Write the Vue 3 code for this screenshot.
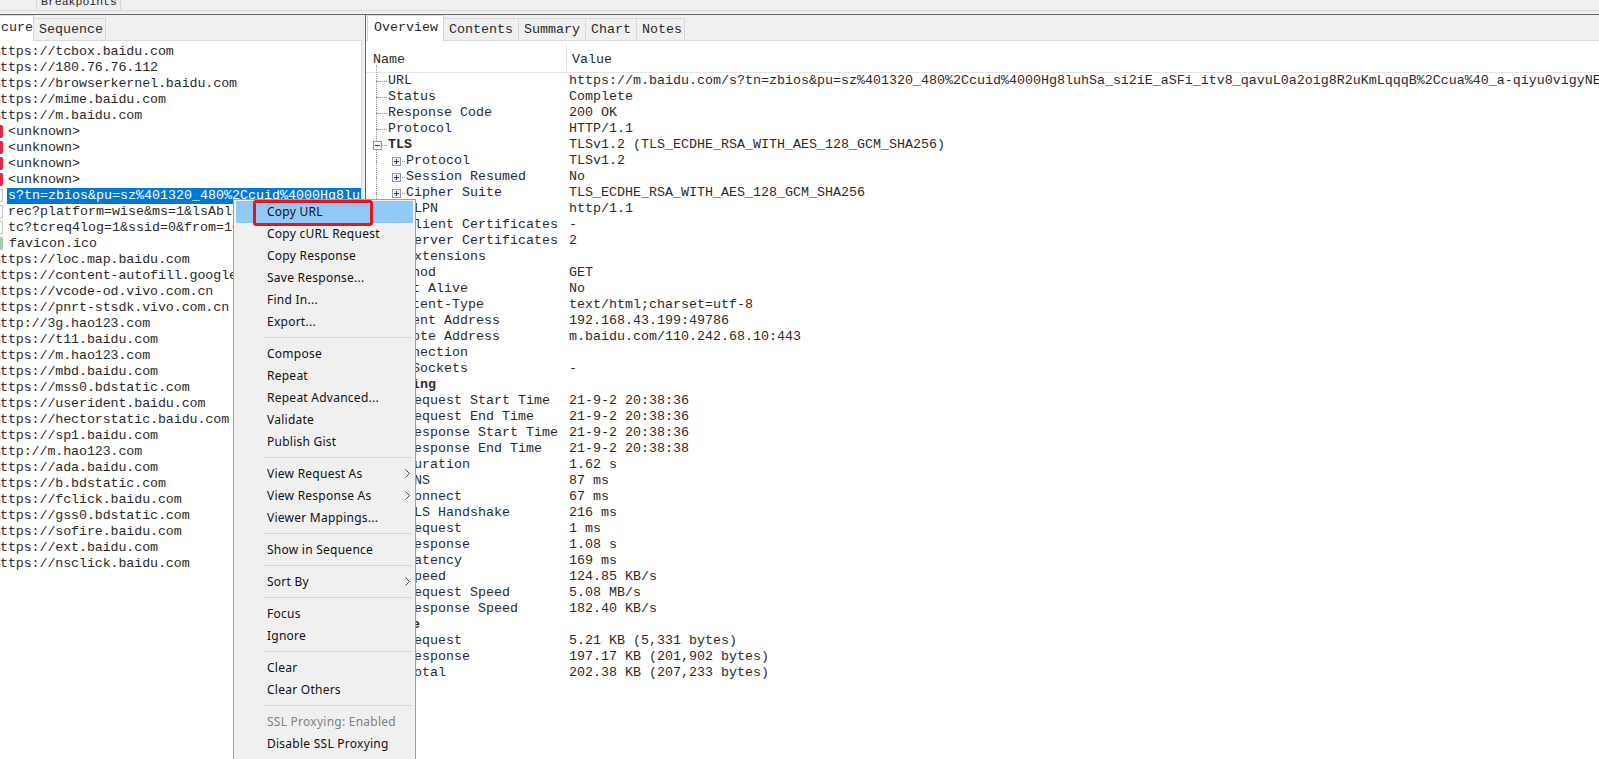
<template>
  <div class="app">
    <div class="topbar">
      <div class="top-first">11 +</div>
      <div class="top-tab">Breakpoints</div>
    </div>

    <div class="panes">
      <section class="left">
        <div class="tabs">
          <div class="tab active first-left">cure</div>
          <div class="tab">Sequence</div>
        </div>
        <div class="tree">
          <div
            v-for="(row, i) in hosts"
            :key="i"
            class="host"
            :class="row.kind || 'plain'"
          >
            <i v-if="row.kind" class="file-icon"></i>
            <span class="host-text">{{ row.text }}</span>
          </div>
        </div>
      </section>

      <section class="right">
        <div class="tabs">
          <div class="tab active">Overview</div>
          <div v-for="t in detailTabs" :key="t" class="tab">{{ t }}</div>
        </div>
        <div class="table">
          <div class="head">
            <div class="head-name">Name</div>
            <div class="head-value">Value</div>
          </div>
          <div v-for="(row, i) in details" :key="i" class="row">
            <div class="name" :class="['lv' + row.lv, { bold: row.bold }]">
              <svg v-if="row.box" class="box" width="9" height="9" viewBox="0 0 9 9">
                <rect x="0.5" y="0.5" width="8" height="8" fill="#f1f3f8" stroke="#8e9ab0" />
                <path d="M2 4.5h5" stroke="#26407e" />
                <path v-if="row.box === 'plus'" d="M4.5 2v5" stroke="#26407e" />
              </svg>
              {{ row.name }}
            </div>
            <div class="value">{{ row.value }}</div>
          </div>
        </div>
      </section>
    </div>

    <div class="menu">
      <template v-for="(m, i) in menu" :key="i">
        <div v-if="m.sep" class="sep"></div>
        <div v-else class="item" :class="{ hot: m.hot, off: m.off }">
          {{ m.label }}
          <svg v-if="m.sub" class="chev" width="5" height="9" viewBox="0 0 5 9">
            <path d="M0.5 0.5l4 4-4 4" fill="none" stroke="#444" />
          </svg>
        </div>
      </template>
      <div class="callout"></div>
    </div>
  </div>
</template>

<script setup>
const baidu = (s) => "ttps://" + s;

const hosts = [
  { text: baidu("tcbox.baidu.com") },
  { text: baidu("180.76.76.112") },
  { text: baidu("browserkernel.baidu.com") },
  { text: baidu("mime.baidu.com") },
  { text: baidu("m.baidu.com") },
  { text: "<unknown>", kind: "bad" },
  { text: "<unknown>", kind: "bad" },
  { text: "<unknown>", kind: "bad" },
  { text: "<unknown>", kind: "bad" },
  { text: "s?tn=zbios&pu=sz%401320_480%2Ccuid%4000Hg8luhSa_si2iE", kind: "doc selected" },
  { text: "rec?platform=wise&ms=1&lsAble=1&pu=sz", kind: "doc" },
  { text: "tc?tcreq4log=1&ssid=0&from=1000", kind: "doc" },
  { text: "favicon.ico", kind: "img" },
  { text: baidu("loc.map.baidu.com") },
  { text: baidu("content-autofill.googleapis.com") },
  { text: baidu("vcode-od.vivo.com.cn") },
  { text: baidu("pnrt-stsdk.vivo.com.cn") },
  { text: "ttp://3g.hao123.com" },
  { text: baidu("t11.baidu.com") },
  { text: baidu("m.hao123.com") },
  { text: baidu("mbd.baidu.com") },
  { text: baidu("mss0.bdstatic.com") },
  { text: baidu("userident.baidu.com") },
  { text: baidu("hectorstatic.baidu.com") },
  { text: baidu("sp1.baidu.com") },
  { text: "ttp://m.hao123.com" },
  { text: baidu("ada.baidu.com") },
  { text: baidu("b.bdstatic.com") },
  { text: baidu("fclick.baidu.com") },
  { text: baidu("gss0.bdstatic.com") },
  { text: baidu("sofire.baidu.com") },
  { text: baidu("ext.baidu.com") },
  { text: baidu("nsclick.baidu.com") },
];

const detailTabs = ["Contents", "Summary", "Chart", "Notes"];

const details = [
  { lv: 1, name: "URL", value: "https://m.baidu.com/s?tn=zbios&pu=sz%401320_480%2Ccuid%4000Hg8luhSa_si2iE_aSFi_itv8_qavuL0a2oig8R2uKmLqqqB%2Ccua%40_a-qiyu0vigyNE" },
  { lv: 1, name: "Status", value: "Complete" },
  { lv: 1, name: "Response Code", value: "200 OK" },
  { lv: 1, name: "Protocol", value: "HTTP/1.1" },
  { lv: 1, name: "TLS", bold: true, box: "minus", value: "TLSv1.2 (TLS_ECDHE_RSA_WITH_AES_128_GCM_SHA256)" },
  { lv: 2, name: "Protocol", box: "plus", value: "TLSv1.2" },
  { lv: 2, name: "Session Resumed", box: "plus", value: "No" },
  { lv: 2, name: "Cipher Suite", box: "plus", value: "TLS_ECDHE_RSA_WITH_AES_128_GCM_SHA256" },
  { lv: 2, name: "ALPN", value: "http/1.1" },
  { lv: 2, name: "Client Certificates", value: "-" },
  { lv: 2, name: "Server Certificates", value: "2" },
  { lv: 2, name: "Extensions", value: "" },
  { lv: 1, name: "Method", value: "GET" },
  { lv: 1, name: "Kept Alive", value: "No" },
  { lv: 1, name: "Content-Type", value: "text/html;charset=utf-8" },
  { lv: 1, name: "Client Address", value: "192.168.43.199:49786" },
  { lv: 1, name: "Remote Address", value: "m.baidu.com/110.242.68.10:443" },
  { lv: 1, name: "Connection", value: "" },
  { lv: 1, name: "WebSockets", value: "-" },
  { lv: 1, name: "Timing", bold: true, box: "minus", value: "" },
  { lv: 2, name: "Request Start Time", value: "21-9-2 20:38:36" },
  { lv: 2, name: "Request End Time", value: "21-9-2 20:38:36" },
  { lv: 2, name: "Response Start Time", value: "21-9-2 20:38:36" },
  { lv: 2, name: "Response End Time", value: "21-9-2 20:38:38" },
  { lv: 2, name: "Duration", value: "1.62 s" },
  { lv: 2, name: "DNS", value: "87 ms" },
  { lv: 2, name: "Connect", value: "67 ms" },
  { lv: 2, name: "TLS Handshake", value: "216 ms" },
  { lv: 2, name: "Request", value: "1 ms" },
  { lv: 2, name: "Response", value: "1.08 s" },
  { lv: 2, name: "Latency", value: "169 ms" },
  { lv: 2, name: "Speed", value: "124.85 KB/s" },
  { lv: 2, name: "Request Speed", value: "5.08 MB/s" },
  { lv: 2, name: "Response Speed", value: "182.40 KB/s" },
  { lv: 1, name: "Size", bold: true, box: "minus", value: "" },
  { lv: 2, name: "Request", value: "5.21 KB (5,331 bytes)" },
  { lv: 2, name: "Response", value: "197.17 KB (201,902 bytes)" },
  { lv: 2, name: "Total", value: "202.38 KB (207,233 bytes)" },
];

const menu = [
  { label: "Copy URL", hot: true },
  { label: "Copy cURL Request" },
  { label: "Copy Response" },
  { label: "Save Response..." },
  { label: "Find In..." },
  { label: "Export..." },
  { sep: true },
  { label: "Compose" },
  { label: "Repeat" },
  { label: "Repeat Advanced..." },
  { label: "Validate" },
  { label: "Publish Gist" },
  { sep: true },
  { label: "View Request As", sub: true },
  { label: "View Response As", sub: true },
  { label: "Viewer Mappings..." },
  { sep: true },
  { label: "Show in Sequence" },
  { sep: true },
  { label: "Sort By", sub: true },
  { sep: true },
  { label: "Focus" },
  { label: "Ignore" },
  { sep: true },
  { label: "Clear" },
  { label: "Clear Others" },
  { sep: true },
  { label: "SSL Proxying: Enabled", off: true },
  { label: "Disable SSL Proxying" },
];
</script>

<style>
html,
body {
  margin: 0;
  overflow: hidden;
  background: #f0f0f0;
}
</style>

<style scoped>
.app {
  position: relative;
  width: 1599px;
  height: 759px;
  overflow: hidden;
  display: flex;
  flex-direction: column;
  background: #f0f0f0;
  font-family: "Liberation Mono", monospace;
  font-size: 13.33px;
  line-height: 16px;
  color: #2a2a2a;
}

.topbar {
  height: 10px;
  margin-bottom: 3px;
  border-bottom: 1px solid #d9d9d9;
  display: flex;
  align-items: flex-end;
  overflow: hidden;
  flex: none;
}
.top-first {
  width: 36px;
  height: 21px;
  flex: none;
  white-space: pre;
  overflow: hidden;
}
.top-tab {
  height: 16px;
  flex: none;
  padding: 0 3px 0 4px;
  border: 1px solid #d9d9d9;
  border-bottom: 0;
  white-space: nowrap;
  font-size: 11.5px;
}

.panes {
  flex: 1;
  min-height: 0;
  display: flex;
  border-top: 1px solid #696969;
}

.left {
  width: 365px;
  flex: none;
  display: flex;
  flex-direction: column;
  padding-right: 3px;
  box-sizing: border-box;
}
.right {
  flex: 1;
  min-width: 0;
  display: flex;
  flex-direction: column;
  border-left: 1px solid #696969;
  background: #fff;
}

.tabs {
  height: 26px;
  flex: none;
  display: flex;
  align-items: flex-end;
  background: #f0f0f0;
  border-bottom: 1px solid #d9d9d9;
  box-sizing: border-box;
}
.right .tabs {
  padding-left: 1px;
}
.tab {
  height: 22px;
  padding: 3px 5px 0;
  box-sizing: border-box;
  border-right: 1px solid #d9d9d9;
  border-top: 1px solid #d9d9d9;
  white-space: nowrap;
}
.tab:last-child {
  padding-right: 2px;
}
.tab.active {
  height: 26px;
  margin-bottom: -1px;
  padding: 4px 5px 0 6px;
  background: #fff;
  border-top: 1px solid #d9d9d9;
  border-left: 1px solid #d9d9d9;
  position: relative;
}
.tab.first-left {
  width: 34px;
  padding-left: 1px;
  border-left: 0;
}

.tree {
  flex: 1;
  min-height: 0;
  overflow: hidden;
  background: #fff;
  border-right: 1px solid #d9d9d9;
  padding-top: 3px;
}
.host {
  height: 16px;
  display: flex;
  white-space: nowrap;
  overflow: hidden;
}
.host-text {
  display: block;
}
.plain .host-text {
  letter-spacing: -0.1px;
}
.file-icon {
  width: 3px;
  height: 13px;
  margin: 1px 5px 0 0;
  flex: none;
  box-sizing: border-box;
}
.bad .file-icon {
  background: #ee2144;
  border-radius: 0 2px 2px 0;
}
.doc .file-icon {
  background: #fbfbfb;
  border: 1px solid #c4c4c4;
  border-left: 0;
}
.img .file-icon {
  background: #9fd79a;
  border: 1px solid #b9c4b9;
  border-left: 0;
}
.selected .host-text {
  flex: 1;
  min-width: 0;
  overflow: hidden;
  background: #0078d7;
  color: #fff;
  padding-left: 1px;
  margin-left: -1px;
}
.img .host-text {
  margin-left: 1px;
}

.table {
  flex: 1;
  min-height: 0;
  padding-top: 3px;
  overflow: hidden;
}
.head {
  height: 29px;
  display: flex;
  box-sizing: border-box;
  border-bottom: 1px solid #e5e5e5;
}
.head-name {
  width: 201px;
  flex: none;
  padding: 8px 0 0 7px;
  box-sizing: border-box;
  border-right: 1px solid #e5e5e5;
}
.head-value {
  padding: 8px 0 0 5px;
}

.row {
  height: 16px;
  display: flex;
  white-space: nowrap;
}
.name {
  width: 203px;
  flex: none;
  position: relative;
  box-sizing: border-box;
}
.name::before {
  content: "";
  position: absolute;
  left: 10px;
  top: -8px;
  height: 16px;
  border-left: 1px dotted #9a9a9a;
}
.name::after {
  content: "";
  position: absolute;
  left: 11px;
  top: 8px;
  width: 10px;
  border-top: 1px dotted #9a9a9a;
}
.lv1 {
  padding-left: 22px;
}
.lv2 {
  padding-left: 40px;
}
.lv2::after {
  left: 29px;
  width: 10px;
}
.bold {
  font-weight: 700;
}
.box {
  position: absolute;
  top: 4px;
  left: 7px;
  z-index: 1;
}
.lv2 .box {
  left: 26px;
}
.value {
  flex: 1;
  min-width: 0;
  overflow: hidden;
}

.menu {
  position: absolute;
  z-index: 2;
  left: 233px;
  top: 199px;
  bottom: 0;
  width: 183px;
  box-sizing: border-box;
  padding: 1px 2px 0;
  background: #f0f0f0;
  border: 1px solid #a0a0a0;
  border-bottom: 0;
  font-family: "Noto Sans", sans-serif;
  font-size: 12px;
  letter-spacing: 0.25px;
  line-height: 22px;
  color: #111;
}
.item {
  height: 22px;
  padding-left: 31px;
  position: relative;
  white-space: nowrap;
}
.item.hot {
  background: #91c9f7;
}
.item.off {
  color: #808080;
}
.chev {
  position: absolute;
  right: 3px;
  top: 6px;
}
.sep {
  height: 1px;
  margin: 4px 1px 5px 28px;
  background: #d7d7d7;
}
.callout {
  position: absolute;
  left: 19px;
  top: 0;
  width: 120px;
  height: 26px;
  box-sizing: border-box;
  border: 3px solid #e8141a;
  border-radius: 3px;
}
</style>
